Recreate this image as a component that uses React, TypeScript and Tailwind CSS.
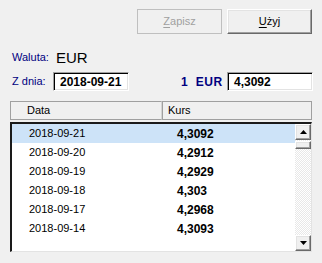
import React from 'react';

const rates = [
  { date: '2018-09-21', value: '4,3092' },
  { date: '2018-09-20', value: '4,2912' },
  { date: '2018-09-19', value: '4,2929' },
  { date: '2018-09-18', value: '4,303' },
  { date: '2018-09-17', value: '4,2968' },
  { date: '2018-09-14', value: '4,3093' },
];

const font = "font-['Liberation_Sans',Arial,sans-serif]";

// Windows-style raised 3D button edge
const raised =
  'border border-t-white border-l-white border-r-[#696969] border-b-[#696969] shadow-[inset_-1px_-1px_0_#a0a0a0,inset_1px_1px_0_#e3e3e3]';

// sunken edit box
const sunken =
  'border border-t-[#a0a0a0] border-l-[#a0a0a0] border-r-white border-b-white shadow-[inset_1px_1px_0_#000,inset_-1px_-1px_0_#e3e3e3]';

function Arrow({ up }: { up?: boolean }) {
  return (
    <svg width="7" height="4" viewBox="0 0 7 4">
      {up ? <path d="M3.5 0 L7 4 L0 4 Z" fill="#000" /> : <path d="M0 0 L7 0 L3.5 4 Z" fill="#000" />}
    </svg>
  );
}

export default function App() {
  return (
    <div className={`w-[322px] h-[263px] bg-[#f0f0f0] overflow-hidden text-[11px] text-black ${font}`}>
      {/* buttons */}
      <div className="flex justify-end gap-[5px] pt-[9px] pr-[10px]">
        <button className="w-[85px] h-[25px] border border-[#bfbfbf] bg-[#f0f0f0] text-[#a0a0a0] text-[11px]">
          <span className="underline underline-offset-2">Z</span>apisz
        </button>
        <button className={`w-[85px] h-[25px] bg-[#f0f0f0] text-[11px] ${raised}`}>
          <span className="underline underline-offset-2">U</span>żyj
        </button>
      </div>

      {/* currency */}
      <div className="flex items-center h-[16px] mt-[15px] pl-[12px]">
        <span className="w-[44px] text-[#000080]">Waluta:</span>
        <span className="text-[15px] leading-none">EUR</span>
      </div>

      {/* date / rate */}
      <div className="flex items-center mt-[7px] pl-[12px] pr-[9px] h-[19px]">
        <span className="w-[41px] text-[#000080]">Z dnia:</span>
        <div className={`w-[76px] h-[19px] bg-white pl-[6px] flex items-center font-bold text-[12px] ${sunken}`}>
          2018-09-21
        </div>
        <span className="ml-[52px] w-[46px] font-bold text-[12px] text-[#000080] tracking-[0.5px]">1&nbsp; EUR</span>
        <div className={`flex-1 h-[19px] bg-white pl-[6px] flex items-center font-bold text-[12px] ${sunken}`}>
          4,3092
        </div>
      </div>

      {/* list header */}
      <div className="flex mt-[10px] mx-[10px] h-[19px]">
        <div className="w-[152px] border border-[#a0a0a0] border-r-[#d4d4d4] pl-[16px] flex items-center">Data</div>
        <div className="flex-1 border border-[#a0a0a0] border-l-[#a0a0a0] pl-[5px] flex items-center">Kurs</div>
      </div>

      {/* list */}
      <div className="flex mt-[2px] mx-[10px] h-[130px] bg-white border-t-2 border-l-2 border-t-[#1a1a1a] border-l-[#1a1a1a] border-b border-r border-b-[#e3e3e3] border-r-[#e3e3e3]">
        <div className="flex-1">
          {rates.map((r, i) => (
            <div key={r.date} className={`flex items-center h-[19px] ${i === 0 ? 'bg-[#cde3f8]' : ''}`}>
              <span className="w-[165px] pl-[17px]">{r.date}</span>
              <span className="font-bold text-[12px]">{r.value}</span>
            </div>
          ))}
        </div>
        <div className="w-[16px] flex flex-col bg-[repeating-conic-gradient(#ffffff_0_25%,#e8e8e8_0_50%)] bg-[length:2px_2px]">
          <div className={`h-[16px] bg-[#f0f0f0] flex items-center justify-center ${raised}`}>
            <Arrow up />
          </div>
          <div className={`h-[8px] mt-[1px] bg-[#f0f0f0] ${raised}`} />
          <div className="flex-1" />
          <div className={`h-[16px] bg-[#f0f0f0] flex items-center justify-center ${raised}`}>
            <Arrow />
          </div>
        </div>
      </div>
    </div>
  );
}
